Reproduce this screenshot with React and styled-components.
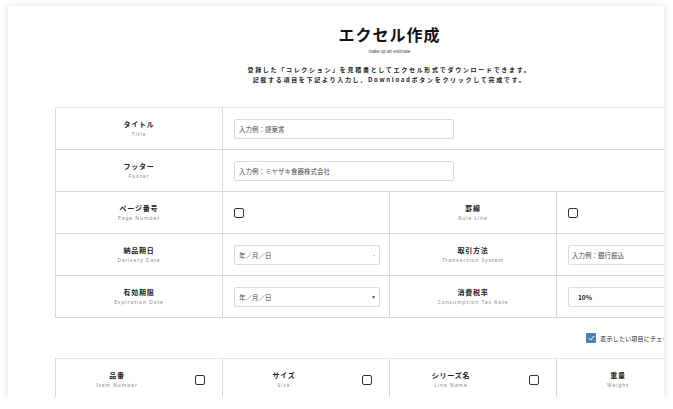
import React from 'react'
import styled, { createGlobalStyle } from 'styled-components'

const GlobalStyle = createGlobalStyle`
  html, body {
    margin: 0;
    padding: 0;
    background: #ffffff;
  }
  body {
    font-family: "Noto Sans CJK JP", "Noto Sans", sans-serif;
    color: #222;
  }
`

const Page = styled.div`
  padding: 6px 9px 0 8px;
`

const Card = styled.div`
  height: 391px;
  background: #fff;
  box-shadow: 0 1px 8px rgba(0, 0, 0, 0.14);
  overflow: hidden;
`

const Inner = styled.div`
  width: 669px;
  margin-left: 47px;
  padding-top: 18px;
`

const Header = styled.div`
  display: flex;
  flex-direction: column;
  align-items: center;
`

const Title = styled.h1`
  margin: 0;
  font-size: 16px;
  line-height: 20px;
  font-weight: 700;
  letter-spacing: 1px;
  color: #111;
`

const Sub = styled.div`
  margin-top: 5px;
  font-family: "Liberation Sans", sans-serif;
  font-size: 4.5px;
  line-height: 6px;
  color: #444;
`

const Desc = styled.p`
  margin: 10px 0 0;
  font-size: 6px;
  line-height: 10px;
  font-weight: 700;
  letter-spacing: 1.7px;
  text-align: center;
  color: #222;
`

const Grid = styled.div`
  display: grid;
  grid-template-columns: repeat(4, 167px);
  border-top: 1px solid #e6e8ea;
  border-left: 1px solid #d6dadd;
  margin-top: ${p => p.$top}px;
`

const Cell = styled.div`
  height: 42px;
  border-right: 1px solid #d6dadd;
  border-bottom: 1px solid #d6dadd;
  display: flex;
  align-items: center;
  grid-column: ${p => (p.$wide ? '2 / 5' : 'auto')};
  padding-left: ${p => (p.$value ? 11 : 0)}px;
  justify-content: ${p => (p.$value ? 'flex-start' : 'center')};
  box-sizing: border-box;
`

const LabelBox = styled.div`
  display: flex;
  flex-direction: column;
  align-items: center;
  width: ${p => (p.$w ? p.$w + 'px' : 'auto')};
`

const Jp = styled.div`
  font-size: 7px;
  line-height: 10px;
  font-weight: 700;
  letter-spacing: 0.8px;
  color: #222;
`

const En = styled.div`
  margin-top: 1px;
  font-family: "Noto Sans", sans-serif;
  font-size: 5px;
  line-height: 8px;
  letter-spacing: 0.9px;
  color: #888;
`

const TextInput = styled.div`
  width: ${p => p.$w}px;
  height: 20px;
  box-sizing: border-box;
  border: 1px solid #dcdcdc;
  border-radius: 2px;
  display: flex;
  align-items: center;
  justify-content: space-between;
  padding: 0 ${p => (p.$pad ? p.$pad : 4)}px;
  font-size: 6.5px;
  color: ${p => (p.$filled ? '#222' : '#4a4a4a')};
  font-weight: ${p => (p.$filled ? 600 : 400)};
  white-space: nowrap;
`

const Arrow = styled.span`
  font-size: 6px;
  color: #666;
`

const Box = styled.span`
  width: 8px;
  height: 8px;
  border: 1px solid #333;
  border-radius: 2px;
  display: inline-block;
  flex-shrink: 0;
  margin-right: ${p => (p.$mr ? p.$mr : 0)}px;
  margin-left: ${p => (p.$ml ? 'auto' : 0)};
`

const CheckedBox = styled.span`
  width: 10px;
  height: 10px;
  border-radius: 1px;
  background: #4a80b5;
  display: inline-flex;
  align-items: center;
  justify-content: center;
  flex-shrink: 0;
`

const Legend = styled.div`
  display: flex;
  justify-content: flex-end;
  align-items: center;
  gap: 4px;
  height: 10px;
  margin-top: 15px;
  font-size: 6px;
  letter-spacing: 0.2px;
  color: #222;
  white-space: nowrap;
`

const HeadCell = styled(Cell)`
  justify-content: flex-start;
`

const Label = ({ jp, en, w }) => (
  <LabelBox $w={w}>
    <Jp>{jp}</Jp>
    <En>{en}</En>
  </LabelBox>
)

const columns = [
  { jp: '品番', en: 'Item Number' },
  { jp: 'サイズ', en: 'Size' },
  { jp: 'シリーズ名', en: 'Line Name' },
  { jp: '重量', en: 'Weight' },
]

export default function App() {
  return (
    <>
      <GlobalStyle />
      <Page>
        <Card>
          <Inner>
            <Header>
              <Title>エクセル作成</Title>
              <Sub>make up an estimate</Sub>
              <Desc>
                登録した「コレクション」を見積書としてエクセル形式でダウンロードできます。
                <br />
                記載する項目を下記より入力し、Downloadボタンをクリックして完成です。
              </Desc>
            </Header>

            <Grid $top={22}>
              <Cell><Label jp="タイトル" en="Title" /></Cell>
              <Cell $wide $value><TextInput $w={220}>入力例：提案書</TextInput></Cell>

              <Cell><Label jp="フッター" en="Footer" /></Cell>
              <Cell $wide $value><TextInput $w={220}>入力例：ミヤザキ食器株式会社</TextInput></Cell>

              <Cell><Label jp="ページ番号" en="Page Number" /></Cell>
              <Cell $value><Box /></Cell>
              <Cell><Label jp="罫線" en="Rule Line" /></Cell>
              <Cell $value><Box /></Cell>

              <Cell><Label jp="納品期日" en="Delivery Date" /></Cell>
              <Cell $value>
                <TextInput $w={146}>年／月／日<Arrow>-</Arrow></TextInput>
              </Cell>
              <Cell><Label jp="取引方法" en="Transaction System" /></Cell>
              <Cell $value><TextInput $w={146} $pad={3}>入力例：銀行振込</TextInput></Cell>

              <Cell><Label jp="有効期限" en="Expiration Date" /></Cell>
              <Cell $value>
                <TextInput $w={146}>年／月／日<Arrow>▾</Arrow></TextInput>
              </Cell>
              <Cell><Label jp="消費税率" en="Consumption Tax Rate" /></Cell>
              <Cell $value><TextInput $w={146} $pad={9} $filled>10%</TextInput></Cell>
            </Grid>

            <Legend>
              <CheckedBox>
                <svg width="7" height="6" viewBox="0 0 7 6">
                  <path d="M0.8 3.2 L2.7 5 L6.2 0.9" fill="none" stroke="#fff" strokeWidth="1" />
                </svg>
              </CheckedBox>
              表示したい項目にチェックを入れてください
            </Legend>

            <Grid $top={15}>
              {columns.map((c, i) => (
                <HeadCell key={c.en}>
                  <Label jp={c.jp} en={c.en} w={122} />
                  {i < 3 && <Box $ml $mr={17} />}
                </HeadCell>
              ))}
            </Grid>
          </Inner>
        </Card>
      </Page>
    </>
  )
}
